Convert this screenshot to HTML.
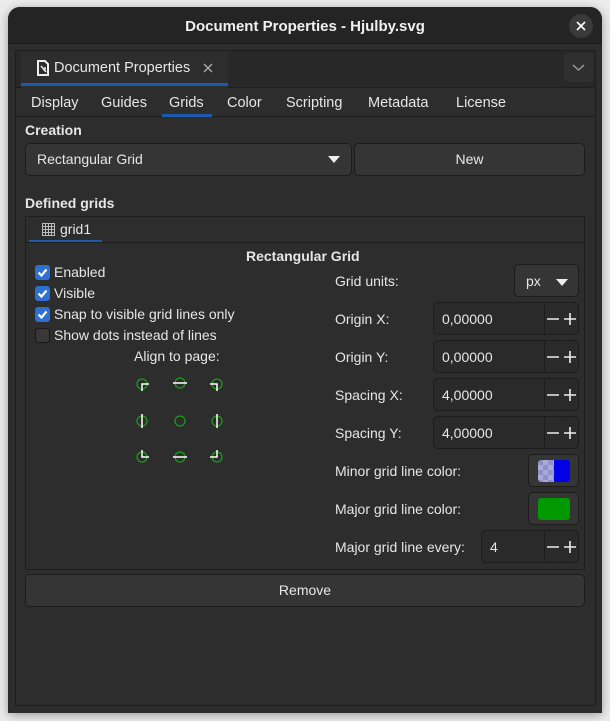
<!DOCTYPE html>
<html><head><style>
*{box-sizing:border-box;margin:0;padding:0}
body{width:610px;height:721px;background:#ececec;font-family:"Liberation Sans",sans-serif;color:#e8e8e8;font-size:14px;position:relative;overflow:hidden}
.a{position:absolute}
.win{left:8px;top:7px;width:594px;height:706px;background:#2d2d2d;border-radius:12px 12px 0 0;box-shadow:0 2px 10px rgba(0,0,0,.35);overflow:hidden}
.btn{background:#353535;border:1px solid #1c1c1c;border-radius:5px}
.ent{background:#2a2a2a;border:1px solid #1c1c1c;border-radius:5px}
.lbl{font-size:14px;color:#e6e6e6;white-space:nowrap}
.pm{position:absolute;right:0;top:0;width:34px;height:100%;border-left:1px solid #1e1e1e}
.pm i{position:absolute;left:16px;top:0;width:1px;height:100%;background:#262626}
</style></head><body>
<div class="a win">
 <div class="a" style="left:0;top:0;width:594px;height:37px;background:#242424;border-bottom:1px solid #1a1a1a"></div>
 <div class="a" style="left:0;top:11px;width:594px;text-align:center;font-weight:bold;font-size:15px;color:#f0f0f0">Document Properties - Hjulby.svg</div>
 <div class="a" style="left:561px;top:7px;width:24px;height:24px;border-radius:12px;background:#3a3a3a"></div>
 <svg class="a" style="left:561px;top:7px" width="24" height="24"><path d="M8 8l8 8M16 8l-8 8" stroke="#fff" stroke-width="1.6"/></svg>
 <div class="a" style="left:7px;top:43px;width:581px;height:656px;border:1px solid #1e1e1e;background:#2d2d2d"></div>
 <div class="a" style="left:8px;top:44px;width:579px;height:37px;background:#282828;border-bottom:1px solid #1e1e1e"></div>
 <div class="a" style="left:13px;top:44px;width:207px;height:37px;background:#2d2d2d"></div>
 <svg class="a" style="left:28px;top:53px" width="14" height="16"><path d="M2 1h7l3 3v11H2z" fill="none" stroke="#eee" stroke-width="2"/><path d="M5 6l5 6M9 7v4" stroke="#eee" stroke-width="1.5"/></svg>
 <div class="a lbl" style="left:46px;top:53px;font-size:14.5px">Document Properties</div>
 <svg class="a" style="left:195px;top:56px" width="10" height="10"><path d="M1 1l8 8M9 1l-8 8" stroke="#aaa" stroke-width="1.4"/></svg>
 <div class="a" style="left:13px;top:76px;width:207px;height:3px;background:#1c5bab"></div>
 <div class="a" style="left:556px;top:46px;width:29px;height:29px;border-radius:4px;background:#2f2f2f"></div>
 <svg class="a" style="left:556px;top:46px" width="29" height="29"><path d="M9 12l5.5 5 5.5-5" fill="none" stroke="#999" stroke-width="1.5"/></svg>
 <div class="a" style="left:8px;top:109px;width:579px;height:1px;background:#1e1e1e"></div>
 <div class="a lbl" style="left:23px;top:88px;font-size:14.5px">Display</div>
 <div class="a lbl" style="left:93px;top:88px;font-size:14.5px">Guides</div>
 <div class="a lbl" style="left:161px;top:88px;font-size:14.5px">Grids</div>
 <div class="a" style="left:154px;top:107px;width:50px;height:3px;background:#1c5bab"></div>
 <div class="a lbl" style="left:219px;top:88px;font-size:14.5px">Color</div>
 <div class="a lbl" style="left:278px;top:88px;font-size:14.5px">Scripting</div>
 <div class="a lbl" style="left:360px;top:88px;font-size:14.5px">Metadata</div>
 <div class="a lbl" style="left:448px;top:88px;font-size:14.5px">License</div>
 <div class="a lbl" style="left:17px;top:115px;font-weight:bold">Creation</div>
 <div class="a btn" style="left:17px;top:136px;width:327px;height:33px"></div>
 <div class="a lbl" style="left:29px;top:144px">Rectangular Grid</div>
 <div class="a" style="left:320px;top:149px;border-left:6px solid transparent;border-right:6px solid transparent;border-top:7px solid #eee"></div>
 <div class="a btn" style="left:346px;top:136px;width:231px;height:33px;text-align:center;line-height:31px">New</div>
 <div class="a lbl" style="left:17px;top:188px;font-weight:bold">Defined grids</div>
 <div class="a" style="left:17px;top:209px;width:560px;height:354px;border:1px solid #1e1e1e"></div>
 <div class="a" style="left:18px;top:235px;width:558px;height:1px;background:#1e1e1e"></div>
 <svg class="a" style="left:33px;top:215px" width="14" height="14"><g stroke="#bbb" stroke-width="1"><path d="M1.5 1v12M4.5 1v12M7.5 1v12M10.5 1v12M13.5 1v12M1 1.5h13M1 4.5h13M1 7.5h13M1 10.5h13M1 13.5h13"/></g></svg>
 <div class="a lbl" style="left:52px;top:214px">grid1</div>
 <div class="a" style="left:21px;top:233px;width:73px;height:2px;background:#1c5bab"></div>
 <div class="a lbl" style="left:238px;top:241px;font-weight:bold">Rectangular Grid</div>
 <svg class="a" style="left:27px;top:258px" width="15" height="78">
  <g><rect width="15" height="15" rx="3" fill="#2f6fd0"/><rect y="21" width="15" height="15" rx="3" fill="#2f6fd0"/><rect y="42" width="15" height="15" rx="3" fill="#2f6fd0"/>
  <rect x=".5" y="63.5" width="14" height="14" rx="3" fill="#383838" stroke="#1a1a1a"/></g>
  <g fill="none" stroke="#fff" stroke-width="2.2"><path d="M3.5 7.5l3 3 5-6"/><path d="M3.5 28.5l3 3 5-6"/><path d="M3.5 49.5l3 3 5-6"/></g>
 </svg>
 <div class="a lbl" style="left:46px;top:257px">Enabled</div>
 <div class="a lbl" style="left:46px;top:278px">Visible</div>
 <div class="a lbl" style="left:46px;top:299px">Snap to visible grid lines only</div>
 <div class="a lbl" style="left:46px;top:320px">Show dots instead of lines</div>
 <div class="a lbl" style="left:126px;top:341px">Align to page:</div>
 <svg class="a" style="left:125px;top:367px" width="95" height="90">
  <g fill="none" stroke="#1a9a1a" stroke-width="1.3">
   <circle cx="9" cy="10" r="5"/><circle cx="47" cy="9" r="5"/><circle cx="84" cy="10" r="5"/>
   <circle cx="9" cy="47" r="5"/><circle cx="47" cy="47" r="5"/><circle cx="84" cy="47" r="5"/>
   <circle cx="9" cy="83" r="5"/><circle cx="47" cy="83" r="5"/><circle cx="84" cy="83" r="5"/>
  </g>
  <g stroke="#fff" stroke-width="1.5" fill="none">
   <path d="M9 17V10h7"/><path d="M40 9h14"/><path d="M77 10h7v7"/>
   <path d="M9 40v14"/><path d="M84 40v14"/>
   <path d="M9 76v7h7"/><path d="M40 83h14"/><path d="M77 83h7v-7"/>
  </g>
 </svg>
 <div class="a lbl" style="left:327px;top:266px">Grid units:</div>
 <div class="a btn" style="left:506px;top:257px;width:65px;height:33px"></div>
 <div class="a lbl" style="left:518px;top:266px">px</div>
 <div class="a" style="left:548px;top:272px;border-left:6px solid transparent;border-right:6px solid transparent;border-top:7px solid #eee"></div>
 <div class="a lbl" style="left:327px;top:304px">Origin X:</div>
 <div class="a ent" style="left:425px;top:295px;width:146px;height:33px"><span class="a lbl" style="left:8px;top:8px">0,00000</span><div class="pm"><i></i></div></div>
 <div class="a lbl" style="left:327px;top:342px">Origin Y:</div>
 <div class="a ent" style="left:425px;top:333px;width:146px;height:33px"><span class="a lbl" style="left:8px;top:8px">0,00000</span><div class="pm"><i></i></div></div>
 <div class="a lbl" style="left:327px;top:380px">Spacing X:</div>
 <div class="a ent" style="left:425px;top:371px;width:146px;height:33px"><span class="a lbl" style="left:8px;top:8px">4,00000</span><div class="pm"><i></i></div></div>
 <div class="a lbl" style="left:327px;top:418px">Spacing Y:</div>
 <div class="a ent" style="left:425px;top:409px;width:146px;height:33px"><span class="a lbl" style="left:8px;top:8px">4,00000</span><div class="pm"><i></i></div></div>
 <div class="a lbl" style="left:327px;top:456px">Minor grid line color:</div>
 <div class="a btn" style="left:520px;top:447px;width:51px;height:33px"></div>
 <div class="a" style="left:530px;top:453px;width:16px;height:22px;background:repeating-conic-gradient(#aaaad8 0 25%,#9090c8 0 50%) 0 0/10px 10px;border-radius:3px 0 0 3px"></div>
 <div class="a" style="left:546px;top:453px;width:16px;height:22px;background:#0000e6;border-radius:0 3px 3px 0"></div>
 <div class="a lbl" style="left:327px;top:494px">Major grid line color:</div>
 <div class="a btn" style="left:520px;top:485px;width:51px;height:33px"></div>
 <div class="a" style="left:530px;top:491px;width:32px;height:22px;background:#009900;border-radius:3px"></div>
 <div class="a lbl" style="left:327px;top:532px">Major grid line every:</div>
 <div class="a ent" style="left:473px;top:523px;width:98px;height:33px"><span class="a lbl" style="left:8px;top:8px">4</span><div class="pm"><i></i></div></div>
 <svg class="a" style="left:537px;top:295px" width="34" height="262">
  <g stroke="#eee" stroke-width="1.6" fill="none">
   <path d="M2 17h12M19 17h12M25 11v12"/>
   <path d="M2 55h12M19 55h12M25 49v12"/>
   <path d="M2 93h12M19 93h12M25 87v12"/>
   <path d="M2 131h12M19 131h12M25 125v12"/>
   <path d="M2 245h12M19 245h12M25 239v12"/>
  </g>
 </svg>
 <div class="a btn" style="left:17px;top:567px;width:560px;height:33px;text-align:center;line-height:31px">Remove</div>
</div>
</body></html>
